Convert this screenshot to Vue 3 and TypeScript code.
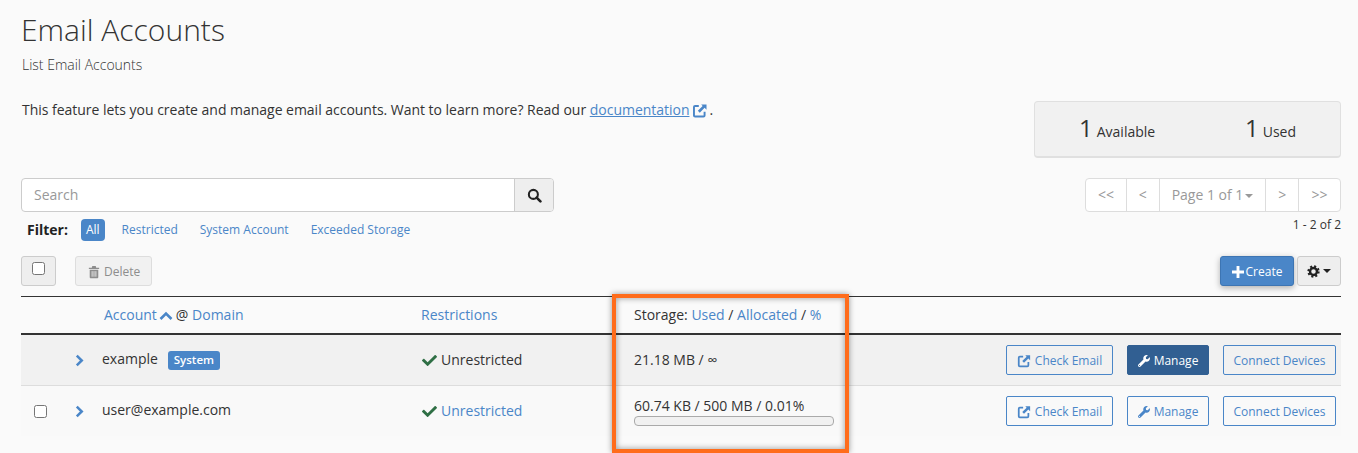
<script setup lang="ts">
const filters = ['Restricted', 'System Account', 'Exceeded Storage']
const wrench = 'M507.73 109.1c-2.24-9.03-13.54-12.09-20.12-5.51l-74.36 74.36-67.88-11.31-11.31-67.88 74.36-74.36c6.62-6.62 3.43-17.9-5.66-20.16-47.38-11.74-99.55.91-136.58 37.93-39.64 39.64-50.55 97.1-34.05 147.2L18.74 402.76c-24.99 24.99-24.99 65.51 0 90.5 24.99 24.99 65.51 24.99 90.5 0l213.21-213.21c50.12 16.71 107.47 5.68 147.37-34.22 37.07-37.07 49.7-89.32 37.91-136.73zM64 472c-13.25 0-24-10.75-24-24 0-13.26 10.75-24 24-24s24 10.74 24 24c0 13.25-10.75 24-24 24z'
const check = 'M173.898 439.404l-166.4-166.4c-9.997-9.997-9.997-26.206 0-36.204l36.203-36.204c9.997-9.998 26.207-9.998 36.204 0L192 312.69 432.095 72.596c9.997-9.997 26.207-9.997 36.204 0l36.203 36.204c9.997 9.997 9.997 26.206 0 36.204l-294.4 294.401c-9.998 9.997-26.207 9.997-36.204-.001z'
const rows = [
  { name: 'example', system: true, link: false, storage: '21.18 MB / ∞', bar: false, active: true, select: false },
  { name: 'user@example.com', system: false, link: true, storage: '60.74 KB / 500 MB / 0.01%', bar: true, active: false, select: true },
]
</script>

<template>
  <main class="page">
    <h1 class="title">Email Accounts</h1>
    <p class="subtitle">List Email Accounts</p>

    <section class="intro">
      <p class="lead">
        This feature lets you create and manage email accounts. Want to learn more? Read our
        <a class="doc">documentation</a>
        <svg class="ext doc-ext" viewBox="1 1 14.500 14.500"><path d="M7 3H3.2C2.5 3 2 3.5 2 4.2v8.6c0 .7.5 1.2 1.2 1.2h8.6c.7 0 1.2-.5 1.2-1.2V9" fill="none" stroke="currentColor" stroke-width="2"/><path d="M9.5 1.5H15V7l-2-2-5 5-2-2 5-5z" fill="currentColor"/></svg>
        <span class="dot">.</span>
      </p>
      <div class="stats">
        <div class="stat"><b>1</b><span>Available</span></div>
        <div class="stat"><b>1</b><span>Used</span></div>
      </div>
    </section>

    <section class="tools">
      <div class="left-tools">
        <div class="search">
          <div class="search-input">Search</div>
          <button class="search-btn">
            <svg viewBox="0 0 16 16" width="15" height="15"><circle cx="6.8" cy="6.8" r="4.8" fill="none" stroke="#222" stroke-width="2.2"/><path d="M10.3 10.3l4 4" stroke="#222" stroke-width="2.8" stroke-linecap="round"/></svg>
          </button>
        </div>
        <div class="filters">
          <strong>Filter:</strong>
          <span class="pill">All</span>
          <a v-for="f in filters" :key="f">{{ f }}</a>
        </div>
      </div>
      <div class="right-tools">
        <div class="pager">
          <span class="p1">&lt;&lt;</span><span class="p2">&lt;</span>
          <span class="p3">Page 1 of 1<i class="caret grey"></i></span>
          <span class="p2">&gt;</span><span class="p1">&gt;&gt;</span>
        </div>
        <div class="count">1 - 2 of 2</div>
      </div>
    </section>

    <section class="actions">
      <div class="left-actions">
        <div class="check-btn"><span class="box"></span></div>
        <div class="del-btn">
          <svg viewBox="0 0 14 16" width="12" height="14"><path d="M1 3h12v1.6H1zM5 1h4l.6 2H4.400zM2 5.500h10V14c0 .8-.6 1.400-1.300 1.400H3.300C2.600 15.400 2 14.800 2 14z" fill="#8d8d8d"/><path d="M4.800 7v6.500M7 7v6.500M9.200 7v6.500" stroke="#f1f1f1"/></svg>
          Delete
        </div>
      </div>
      <div class="right-actions">
        <div class="create">
          <svg viewBox="1 1 10 10" width="12" height="12"><path d="M6 1v10M1 6h10" stroke="#fff" stroke-width="2.400"/></svg>
          Create
        </div>
        <div class="gear">
          <svg viewBox="0 0 16 16" width="13" height="13"><circle cx="8" cy="8" r="4.300" fill="none" stroke="#222" stroke-width="3"/><circle cx="8" cy="8" r="6.300" fill="none" stroke="#222" stroke-width="2.600" stroke-dasharray="2.500 2.450"/></svg>
          <i class="caret dark"></i>
        </div>
      </div>
    </section>

    <section class="table">
      <div class="row head">
        <div></div>
        <div class="c-account">
          <a>Account</a>
          <svg viewBox="0 0 14 10" width="14" height="10"><path d="M1.500 8L7 2.500 12.500 8" fill="none" stroke="#4a86c8" stroke-width="2.600"/></svg>
          <span>@</span> <a>Domain</a>
        </div>
        <div><a>Restrictions</a></div>
        <div>Storage: <a>Used</a> / <a>Allocated</a> / <a>%</a></div>
        <div></div>
      </div>
      <div v-for="r in rows" :key="r.name" class="row body" :class="{ shaded: r.active }">
        <div class="c-select"><span v-if="r.select" class="box"></span></div>
        <div class="c-name">
          <svg class="chev" viewBox="0 0 10 14" width="9" height="13"><path d="M2 1.500L7.500 7 2 12.500" fill="none" stroke="#4a86c8" stroke-width="2.800"/></svg>
          <span class="name">{{ r.name }}</span>
          <span v-if="r.system" class="badge">System</span>
        </div>
        <div class="c-restrict">
          <svg viewBox="0 0 512 512" width="15" height="15"><path :d="check" fill="#2f6f45"/></svg>
          <a v-if="r.link">Unrestricted</a><span v-else>Unrestricted</span>
        </div>
        <div class="c-storage" :class="{ 'with-bar': r.bar }">
          <div>{{ r.storage }}</div>
          <div v-if="r.bar" class="bar"></div>
        </div>
        <div class="c-btns">
          <span class="btn check-email">
            <svg class="ext" viewBox="0 0 16 16"><path d="M7 3H3.2C2.500 3 2 3.500 2 4.200v8.600c0 .7.5 1.200 1.200 1.200h8.600c.7 0 1.200-.5 1.200-1.200V9" fill="none" stroke="currentColor" stroke-width="2"/><path d="M9.500 1.500H15V7l-2-2-5 5-2-2 5-5z" fill="currentColor"/></svg>
            Check Email
          </span>
          <span class="btn manage" :class="{ on: r.active }">
            <svg viewBox="0 0 512 512" width="12" height="12"><path :d="wrench" fill="currentColor"/></svg>
            Manage
          </span>
          <span class="btn connect">Connect Devices</span>
        </div>
      </div>
    </section>

    <div class="highlight" aria-hidden="true"></div>
  </main>
</template>

<style>
html, body { margin: 0; background: #fafafa; }
</style>

<style scoped>
.page {
  position: relative;
  box-sizing: border-box;
  width: 1358px;
  height: 453px;
  overflow: hidden;
  padding: 0 17px 0 21px;
  background: #fafafa;
  color: #333;
  font: 14px/20px "Open Sans", sans-serif;
}
a { color: #4a86c8; }
.title {
  margin: 0;
  padding-top: 9px;
  font-size: 30px;
  line-height: 41px;
  font-weight: 300;
  color: #333;
}
.subtitle {
  margin: 5px 0 0 1px;
  font-size: 14px;
  line-height: 19px;
  font-weight: 300;
  color: #333;
}
.intro {
  display: flex;
  justify-content: space-between;
  align-items: flex-start;
  margin-top: 1px;
}
.lead {
  margin: 25px 0 0 1px;
  line-height: 20px;
  white-space: nowrap;
  letter-spacing: -0.022px;
}
.doc { text-decoration: underline; }
.ext { width: 14px; height: 14px; vertical-align: -3px; }
.doc-ext { color: #4a86c8; margin-left: 4px; }
.dot { margin-left: 2px; }
.stats {
  box-sizing: border-box;
  width: 307px;
  height: 57px;
  margin-top: 26px;
  padding: 0 0 4px 44px;
  display: grid;
  grid-template-columns: 166px 1fr;
  align-items: center;
  background: #f1f1f1;
  border: 1px solid #e0e0e0;
  border-bottom-width: 2px;
  border-radius: 4px;
}
.stat b {
  font-weight: 400;
  font-size: 24px;
  line-height: 33px;
  margin-right: 4px;
}
.tools {
  display: flex;
  justify-content: space-between;
  align-items: flex-start;
  margin-top: 20px;
}
.left-tools { width: 533px; }
.search {
  display: flex;
  height: 34px;
  box-sizing: border-box;
  border: 1px solid #ccc;
  border-radius: 4px;
  background: #fff;
  overflow: hidden;
}
.search-input {
  flex: 1;
  padding: 6px 12px;
  line-height: 20px;
  color: #999;
}
.search-btn {
  width: 39px;
  padding: 0;
  border: 0;
  border-left: 1px solid #ccc;
  background: #eee;
  display: flex;
  align-items: center;
  justify-content: center;
}
.filters {
  display: flex;
  align-items: center;
  height: 22px;
  margin-top: 7px;
  padding-left: 6px;
  font-size: 12px;
}
.filters strong { font-weight: 700; font-size: 14px; margin-right: 13px; color: #222; }
.pill {
  box-sizing: border-box;
  height: 22px;
  padding: 0 5px;
  line-height: 21px;
  border-radius: 4px;
  background: #4a86c8;
  color: #fff;
  margin-right: 17px;
}
.filters a { margin-right: 22px; }
.right-tools { display: flex; flex-direction: column; align-items: flex-end; }
.pager {
  display: flex;
  box-sizing: border-box;
  height: 34px;
  width: 256px;
  border: 1px solid #ddd;
  border-radius: 4px;
  background: #fff;
  color: #999;
  line-height: 32px;
  text-align: center;
}
.pager span { box-sizing: border-box; border-right: 1px solid #ddd; }
.pager span:last-child { border-right: 0; }
.p1 { width: 41px; }
.p2 { width: 33px; }
.p3 { width: 107px; }
.caret {
  display: inline-block;
  width: 0;
  height: 0;
  border-left: 4px solid transparent;
  border-right: 4px solid transparent;
  border-top: 4px solid #999;
  vertical-align: 2px;
  margin-left: 2px;
}
.caret.dark { border-top-color: #222; }
.count { font-size: 12px; line-height: 16px; margin-top: 5px; color: #333; }
.actions {
  display: flex;
  justify-content: space-between;
  align-items: flex-start;
  margin-top: 15px;
}
.left-actions, .right-actions { display: flex; }
.check-btn {
  box-sizing: border-box;
  width: 35px;
  height: 30px;
  padding: 5px 0 0 10px;
  border: 1px solid #ccc;
  border-radius: 3px;
  background: #eee;
}
.box {
  display: block;
  box-sizing: border-box;
  width: 13px;
  height: 13px;
  background: #fff;
  border: 1px solid #767676;
  border-radius: 2.500px;
}
.del-btn {
  box-sizing: border-box;
  display: flex;
  align-items: center;
  gap: 4px;
  margin-left: 19px;
  width: 77px;
  height: 30px;
  padding: 1px 0 0 12px;
  border: 1px solid #ddd;
  border-radius: 3px;
  background: #f1f1f1;
  color: #8d8d8d;
  font-size: 12px;
}
.create {
  box-sizing: border-box;
  display: flex;
  align-items: center;
  justify-content: center;
  gap: 2px;
  width: 74px;
  height: 30px;
  padding-top: 1px;
  border: 1px solid #3d75b3;
  border-radius: 3px;
  background: #4a86c8;
  color: #fff;
  font-size: 12px;
  box-shadow: 0 2px 6px rgba(0, 0, 0, 0.3);
}
.gear {
  box-sizing: border-box;
  display: flex;
  align-items: center;
  justify-content: center;
  gap: 1px;
  width: 44px;
  height: 30px;
  margin-left: 3px;
  border: 1px solid #ccc;
  border-radius: 3px;
  background: #eee;
}
.table { margin-top: 10px; }
.row {
  display: grid;
  grid-template-columns: 54px 346px 213px 1fr auto;
  align-items: center;
}
.head {
  border-top: 1px solid #333;
  border-bottom: 2px solid #333;
  box-sizing: border-box;
  height: 39px;
}
.c-account { padding-left: 29px; }
.c-account svg { margin: 0 3px 0 2px; vertical-align: -1px; }
.body {
  height: 51px;
  box-sizing: border-box;
  border-bottom: 1px solid #ddd;
  background: #f9f9f9;
}
.body:last-child { border-bottom: 0; height: 50px; }
.shaded { background: #f1f1f1; }
.c-select { padding-left: 13px; }
.c-name { display: flex; align-items: center; }
.chev { margin-right: 18px; }
.name { margin-top: -2px; }
.badge {
  box-sizing: border-box;
  width: 52px;
  margin-left: 10px;
  height: 19px;
  line-height: 18px;
  text-align: center;
  font-size: 11.5px;
  font-weight: 600;
  border-radius: 3px;
  background: #4a86c8;
  color: #fff;
}
.c-restrict { display: flex; align-items: center; gap: 4px; margin-left: 1px; }
.c-storage { align-self: center; }
.c-storage.with-bar { align-self: start; padding-top: 10px; }
.bar {
  box-sizing: border-box;
  width: 200px;
  height: 10px;
  border: 1px solid #aaa;
  border-radius: 4px;
  background: #f1f1f1;
}
.c-btns { display: flex; gap: 14px; padding-right: 5px; }
.btn {
  box-sizing: border-box;
  display: flex;
  align-items: center;
  justify-content: center;
  height: 30px;
  padding-top: 1px;
  border: 1px solid #4a86c8;
  border-radius: 2px;
  color: #4a86c8;
  font-size: 12px;
  gap: 4px;
}
.check-email { width: 107px; }
.manage { width: 82px; }
.manage.on { background: #315f92; border-color: #315f92; color: #fff; }
.connect { width: 113px; }
.highlight {
  position: absolute;
  left: 612px;
  top: 294px;
  width: 237px;
  height: 159px;
  box-sizing: border-box;
  border: 4px solid #ff6c1b;
  box-shadow: 0 0 6px rgba(0, 0, 0, 0.4), inset 0 0 6px rgba(0, 0, 0, 0.4);
}
</style>
